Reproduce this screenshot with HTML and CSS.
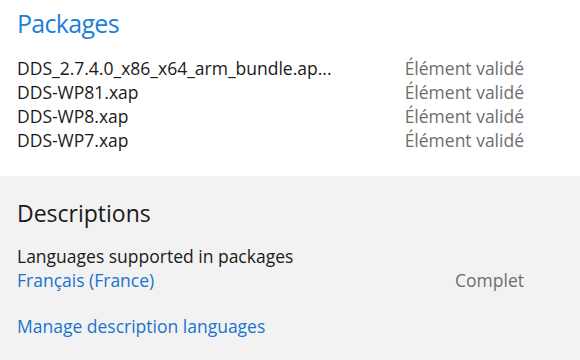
FILE: index.html
```html
<!DOCTYPE html>
<html>
  <head>
    <title>Packages - Descriptions</title>
    <meta charset="UTF-8">
    <link rel="stylesheet" href="styles.css">
  </head>
  <body>
    <section class="packages">
      <h2 class="title">Packages</h2>
      <ul class="files">
        <li><span class="name">DDS_2.7.4.0_x86_x64_arm_bundle.ap...</span><span class="state">Élément validé</span></li>
        <li><span class="name">DDS-WP81.xap</span><span class="state">Élément validé</span></li>
        <li><span class="name">DDS-WP8.xap</span><span class="state">Élément validé</span></li>
        <li><span class="name">DDS-WP7.xap</span><span class="state">Élément validé</span></li>
      </ul>
    </section>
    <section class="descriptions">
      <h2 class="subtitle">Descriptions</h2>
      <p class="label">Languages supported in packages</p>
      <div class="lang">
        <a href="#" class="link">Français (France)</a>
        <span class="state">Complet</span>
      </div>
      <a href="#" class="link manage">Manage description languages</a>
    </section>
  </body>
</html>
```

FILE: styles.css
```css
body {
  margin: 0;
  background: #f2f2f2;
  font-family: 'Open Sans', sans-serif;
  font-size: 17.5px;
  color: #1a1a1a;
}
section {
  padding: 0 56px 0 17px;
}
.packages {
  background: white;
  padding-top: 7px;
  padding-bottom: 24px;
}
.title {
  margin: 0;
  font-size: 25px;
  font-weight: normal;
  letter-spacing: -0.7px;
  line-height: 32px;
  color: #1f7fd6;
}
.files {
  list-style: none;
  margin: 17px 0 0;
  padding: 0;
}
.files li {
  display: flex;
  justify-content: space-between;
  line-height: 24px;
}
.name {
  white-space: nowrap;
  overflow: hidden;
  text-overflow: ellipsis;
}
.state {
  color: #6e6e6e;
  white-space: nowrap;
}
.descriptions {
  padding-top: 22px;
}
.subtitle {
  margin: 0;
  font-size: 23px;
  font-weight: normal;
  line-height: 30px;
}
.label {
  margin: 16px 0 0;
  line-height: 24px;
}
.lang {
  display: flex;
  justify-content: space-between;
  line-height: 24px;
}
.link {
  color: #1a73cc;
  text-decoration: none;
}
.manage {
  display: block;
  margin-top: 22px;
  line-height: 24px;
}
```
